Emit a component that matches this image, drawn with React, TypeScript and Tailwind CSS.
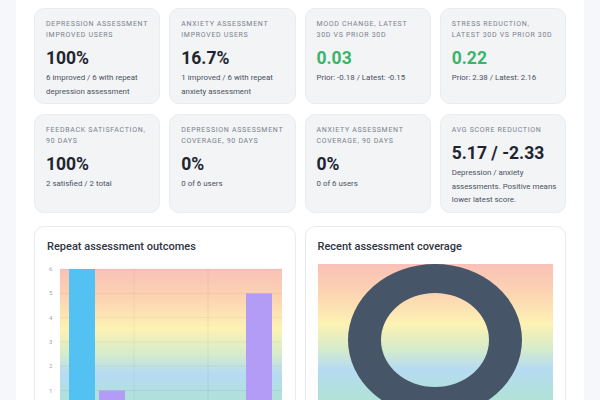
const font = { fontFamily: 'Roboto, "Noto Sans", sans-serif' };

type Stat = {
  label: string;
  value: string;
  sub: string;
  green?: boolean;
};

const rowOne: Stat[] = [
  { label: 'Depression assessment improved users', value: '100%', sub: '6 improved / 6 with repeat depression assessment' },
  { label: 'Anxiety assessment improved users', value: '16.7%', sub: '1 improved / 6 with repeat anxiety assessment' },
  { label: 'Mood change, latest 30d vs prior 30d', value: '0.03', sub: 'Prior: -0.18 / Latest: -0.15', green: true },
  { label: 'Stress reduction, latest 30d vs prior 30d', value: '0.22', sub: 'Prior: 2.38 / Latest: 2.16', green: true },
];

const rowTwo: Stat[] = [
  { label: 'Feedback satisfaction, 90 days', value: '100%', sub: '2 satisfied / 2 total' },
  { label: 'Depression assessment coverage, 90 days', value: '0%', sub: '0 of 6 users' },
  { label: 'Anxiety assessment coverage, 90 days', value: '0%', sub: '0 of 6 users' },
  { label: 'Avg score reduction', value: '5.17 / -2.33', sub: 'Depression / anxiety assessments. Positive means lower latest score.' },
];

const StatCard = ({ stat, tall }: { stat: Stat; tall?: boolean }) => (
  <div
    className={`${tall ? 'h-[99px]' : 'h-[96px]'} rounded-[10px] border border-[#e9ecf0] bg-[#f2f4f6] pl-[11px] pr-[6px] pt-[10px]`}
  >
    <div className="text-[7px] uppercase leading-[11px] tracking-[0.1em] text-[#7b818b]">{stat.label}</div>
    <div
      className={`mt-[6px] text-[17.5px] font-bold leading-[22px] ${stat.green ? 'text-[#3bb46a]' : 'text-[#1f2530]'}`}
    >
      {stat.value}
    </div>
    <div className="mt-[2px] text-[7.9px] leading-[13.5px] text-[#4b5260]">{stat.sub}</div>
  </div>
);

const Gradient = ({ id }: { id: string }) => (
  <linearGradient id={id} x1="0" y1="0" x2="0" y2="1">
    <stop offset="0" stopColor="#f9c1b7" />
    <stop offset="0.2" stopColor="#fcd4b2" />
    <stop offset="0.41" stopColor="#fdf2b3" />
    <stop offset="0.58" stopColor="#d6ecca" />
    <stop offset="0.72" stopColor="#b6dbf3" />
    <stop offset="0.9" stopColor="#b1e1d8" />
  </linearGradient>
);

const BarChart = () => {
  const top = 5;
  const unit = 24.3;
  const left = 13;
  const ticks = [6, 5, 4, 3, 2, 1];
  const bars = [
    { x: 22, v: 6, c: '#53c1f2' },
    { x: 52, v: 1, c: '#b29cf5' },
    { x: 199, v: 5, c: '#b29cf5' },
  ];
  return (
    <svg width="235" height="150" className="block">
      <defs>
        <Gradient id="g1" />
      </defs>
      <rect x={left} y={top} width="222" height={unit * 6} fill="url(#g1)" />
      {ticks.map((t) => (
        <g key={t}>
          <line x1={left} x2={235} y1={top + (6 - t) * unit} y2={top + (6 - t) * unit} stroke="rgba(0,0,0,0.05)" />
          <text x="2" y={top + (6 - t) * unit + 2} fontSize="6" fill="#a3a8b0" style={font}>
            {t}
          </text>
        </g>
      ))}
      {[left + 74, left + 148].map((x) => (
        <line key={x} x1={x} x2={x} y1={top} y2={150} stroke="rgba(0,0,0,0.05)" />
      ))}
      {bars.map((b) => (
        <rect key={b.x} x={b.x} y={top + (6 - b.v) * unit} width="26" height={b.v * unit} fill={b.c} />
      ))}
    </svg>
  );
};

const DonutChart = () => (
  <svg width="235" height="150" className="block">
    <defs>
      <Gradient id="g2" />
    </defs>
    <rect x="0" y="0" width="235" height="146" fill="url(#g2)" />
    <path
      fill="#475569"
      fillRule="evenodd"
      d="M30 76a87 76 0 1 0 174 0a87 76 0 1 0 -174 0ZM63 76a54 47 0 1 0 108 0a54 47 0 1 0 -108 0Z"
    />
  </svg>
);

const ChartCard = ({ title, children }: { title: string; children: React.ReactNode }) => (
  <div className="h-[200px] overflow-hidden rounded-[10px] border border-[#e8ebef] bg-white px-[12px] pt-[12px]">
    <div className="mb-[9px] text-[11px] font-medium leading-[16px] text-[#2f3542]">{title}</div>
    {children}
  </div>
);

export default function App() {
  return (
    <div className="h-[400px] w-full overflow-hidden bg-[#f5f7fa] px-4" style={font}>
      <div className="h-full bg-white px-[18px] pt-2">
        <div className="grid grid-cols-4 gap-x-[9px] gap-y-[10px]">
          {rowOne.map((s) => (
            <StatCard key={s.label} stat={s} />
          ))}
          {rowTwo.map((s) => (
            <StatCard key={s.label} stat={s} tall />
          ))}
        </div>
        <div className="mt-[13px] grid grid-cols-2 gap-[9px]">
          <ChartCard title="Repeat assessment outcomes">
            <BarChart />
          </ChartCard>
          <ChartCard title="Recent assessment coverage">
            <DonutChart />
          </ChartCard>
        </div>
      </div>
    </div>
  );
}
